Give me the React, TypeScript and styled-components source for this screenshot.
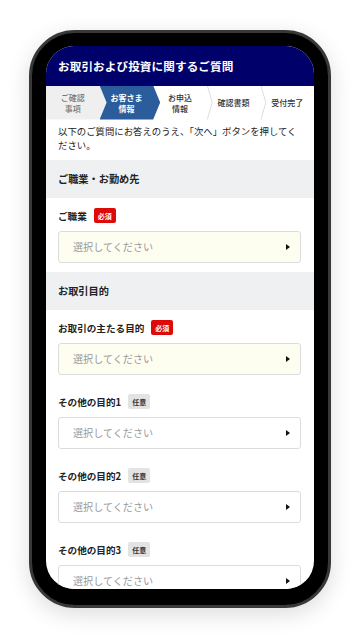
import * as React from "react";
import styled, { createGlobalStyle } from "styled-components";

const GlobalStyle = createGlobalStyle`
  html, body {
    margin: 0;
    padding: 0;
    background: #ffffff;
    font-family: "Noto Sans CJK JP", "Noto Sans", sans-serif;
  }
  * {
    box-sizing: border-box;
  }
`;

const Page = styled.div`
  width: 360px;
  height: 637px;
  display: flex;
  align-items: center;
  justify-content: center;
`;

const Phone = styled.div`
  width: 302px;
  height: 578px;
  padding: 13px 14px 16px;
  border: 3px solid #383838;
  border-radius: 46px;
  background: #000000;
  box-shadow: 0 6px 22px rgba(0, 0, 0, 0.14);
`;

const Screen = styled.div`
  height: 543px;
  border-radius: 28px;
  overflow: hidden;
  background: #ffffff;
  display: flex;
  flex-direction: column;
`;

const TitleBar = styled.header`
  flex: none;
  height: 40px;
  padding: 0 12px;
  display: flex;
  align-items: center;
  background: #00006b;
  color: #ffffff;
  font-size: 11.6px;
  font-weight: 700;
  letter-spacing: 0.1px;
`;

const Steps = styled.ol`
  flex: none;
  margin: 0;
  padding: 0;
  list-style: none;
  height: 34px;
  display: grid;
  grid-template-columns: repeat(5, 1fr);
  background: #ffffff;
`;

type StepState = "done" | "active" | "todo";

const stepBg: Record<StepState, string> = {
  done: "#efefef",
  active: "#2b5d9c",
  todo: "transparent",
};

const stepColor: Record<StepState, string> = {
  done: "#777777",
  active: "#ffffff",
  todo: "#333333",
};

const StepItem = styled.li<{ $state: StepState; $sep?: boolean }>`
  position: relative;
  display: flex;
  align-items: center;
  justify-content: center;
  text-align: center;
  font-size: 8px;
  line-height: 11px;
  font-weight: ${(p) => (p.$state === "active" ? 700 : 500)};
  color: ${(p) => stepColor[p.$state]};

  &::before {
    content: "";
    position: absolute;
    top: 0;
    bottom: 0;
    left: 0;
    right: -7px;
    background: ${(p) => stepBg[p.$state]};
    clip-path: ${(p) =>
      p.$state === "active"
        ? "polygon(0 0, calc(100% - 7px) 0, 100% 50%, calc(100% - 7px) 100%, 0 100%, 7px 50%)"
        : "polygon(0 0, calc(100% - 7px) 0, 100% 50%, calc(100% - 7px) 100%, 0 100%)"};
    z-index: ${(p) => (p.$state === "active" ? 1 : 0)};
  }

  &::after {
    content: "";
    display: ${(p) => (p.$sep ? "block" : "none")};
    position: absolute;
    top: 0;
    bottom: 0;
    right: -6px;
    width: 6px;
    background: #dddddd;
    clip-path: polygon(0 0, 1px 0, 100% 50%, 1px 100%, 0 100%, calc(100% - 1px) 50%);
  }
`;

const StepText = styled.span`
  position: relative;
  z-index: 2;
`;

const Body = styled.div`
  flex: 1;
  overflow: hidden;
`;

const Intro = styled.p`
  margin: 0;
  padding: 4px 12px 8px;
  font-size: 9.4px;
  line-height: 14px;
  color: #222222;
`;

const SectionHead = styled.h2`
  margin: 0;
  height: 38px;
  padding: 0 12px;
  display: flex;
  align-items: center;
  background: #eff0f2;
  font-size: 10.2px;
  font-weight: 700;
  color: #222222;
`;

const FieldGroup = styled.div`
  padding: 9px 13px 9px 12px;
  display: flex;
  flex-direction: column;
  gap: 18px;
`;

const Field = styled.div`
  display: flex;
  flex-direction: column;
  gap: 6px;
`;

const LabelRow = styled.label`
  height: 18px;
  display: flex;
  align-items: center;
  gap: 7px;
  font-size: 9.6px;
  font-weight: 700;
  color: #222222;
`;

const Badge = styled.span<{ $required?: boolean }>`
  height: 15px;
  padding: 0 4px;
  display: inline-flex;
  align-items: center;
  border-radius: 2px;
  font-size: 7px;
  font-weight: 700;
  background: ${(p) => (p.$required ? "#dd0a0a" : "#e3e3e3")};
  color: ${(p) => (p.$required ? "#ffffff" : "#333333")};
`;

const SelectBox = styled.button<{ $required?: boolean }>`
  height: 32px;
  width: 100%;
  padding: 0 10px 0 14px;
  display: flex;
  align-items: center;
  justify-content: space-between;
  border: 1px solid #dcdcdc;
  border-radius: 3px;
  background: ${(p) => (p.$required ? "#fdfdf0" : "#ffffff")};
  font-family: inherit;
  font-size: 10.1px;
  color: #999999;
  text-align: left;
  cursor: pointer;
`;

const Arrow = styled.span`
  width: 0;
  height: 0;
  border-top: 3px solid transparent;
  border-bottom: 3px solid transparent;
  border-left: 4px solid #111111;
`;

type FieldDef = { label: string; required: boolean };

const sections: { title: string; fields: FieldDef[] }[] = [
  {
    title: "ご職業・お勤め先",
    fields: [{ label: "ご職業", required: true }],
  },
  {
    title: "お取引目的",
    fields: [
      { label: "お取引の主たる目的", required: true },
      { label: "その他の目的1", required: false },
      { label: "その他の目的2", required: false },
      { label: "その他の目的3", required: false },
    ],
  },
];

const steps: { text: string[]; state: StepState; sep?: boolean }[] = [
  { text: ["ご確認", "事項"], state: "done" },
  { text: ["お客さま", "情報"], state: "active" },
  { text: ["お申込", "情報"], state: "todo", sep: true },
  { text: ["確認書類"], state: "todo", sep: true },
  { text: ["受付完了"], state: "todo" },
];

export default function App() {
  return (
    <Page>
      <GlobalStyle />
      <Phone>
        <Screen>
          <TitleBar>お取引および投資に関するご質問</TitleBar>
          <Steps>
            {steps.map((s) => (
              <StepItem key={s.text.join("")} $state={s.state} $sep={s.sep}>
                <StepText>
                  {s.text.map((line, i) => (
                    <React.Fragment key={line}>
                      {i > 0 && <br />}
                      {line}
                    </React.Fragment>
                  ))}
                </StepText>
              </StepItem>
            ))}
          </Steps>
          <Body>
            <Intro>
              以下のご質問にお答えのうえ、「次へ」ボタンを押してください。
            </Intro>
            {sections.map((sec) => (
              <section key={sec.title}>
                <SectionHead>{sec.title}</SectionHead>
                <FieldGroup>
                  {sec.fields.map((f) => (
                    <Field key={f.label}>
                      <LabelRow>
                        {f.label}
                        <Badge $required={f.required}>
                          {f.required ? "必須" : "任意"}
                        </Badge>
                      </LabelRow>
                      <SelectBox type="button" $required={f.required}>
                        選択してください
                        <Arrow />
                      </SelectBox>
                    </Field>
                  ))}
                </FieldGroup>
              </section>
            ))}
          </Body>
        </Screen>
      </Phone>
    </Page>
  );
}
